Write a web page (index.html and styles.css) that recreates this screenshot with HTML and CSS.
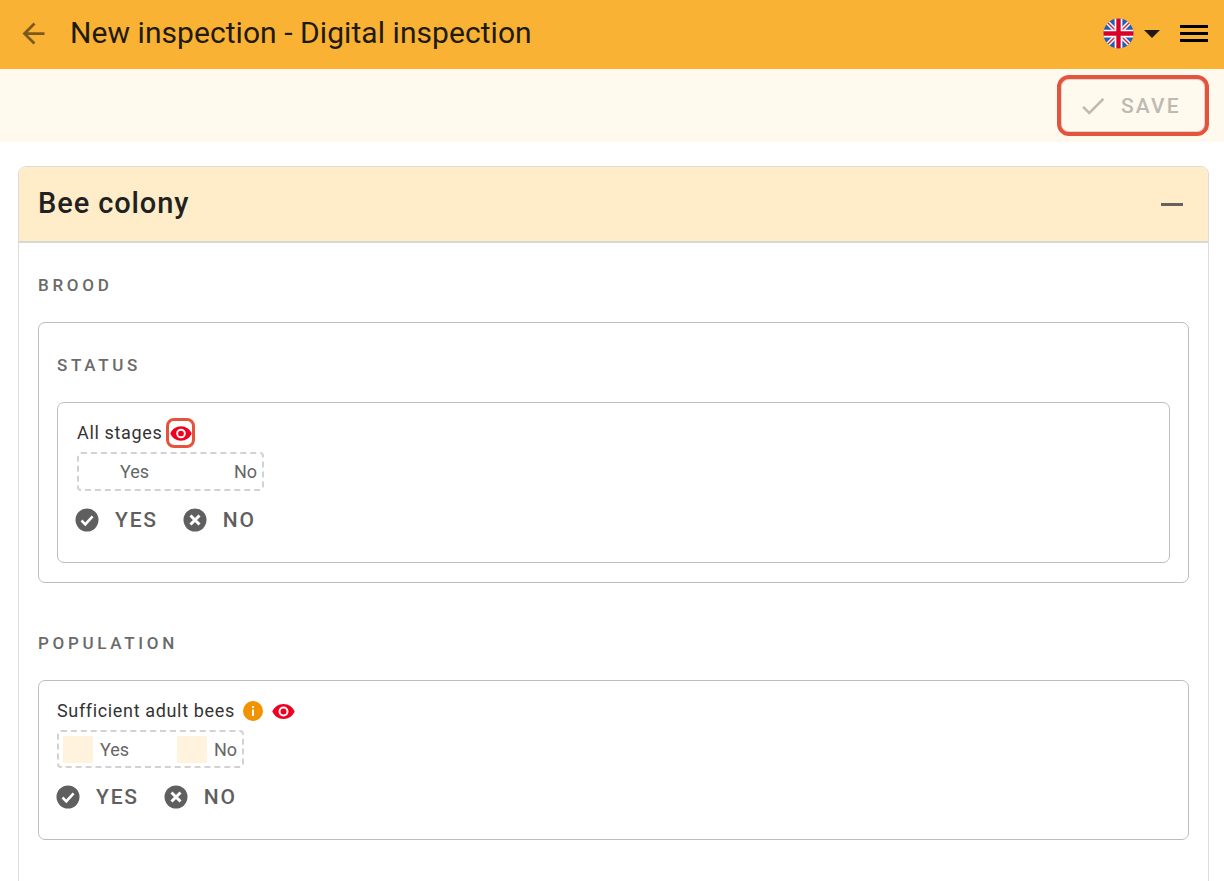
FILE: index.html
```html
<!DOCTYPE html>
<html lang="en">
<head>
<meta charset="utf-8">
<title>New inspection - Digital inspection</title>
<link rel="stylesheet" href="styles.css">
</head>
<body>
<div class="page">
  <header class="topbar">
    <svg class="back" width="33" height="33" viewBox="0 0 24 24"><path d="M20 11H7.83l5.59-5.59L12 4l-8 8 8 8 1.41-1.41L7.83 13H20z"/></svg>
    <h1 class="title">New inspection - Digital inspection</h1>
    <svg class="flag" width="31" height="31" viewBox="0 0 32 32">
      <defs><clipPath id="fc"><circle cx="16" cy="16" r="15.5"/></clipPath></defs>
      <g clip-path="url(#fc)">
        <rect width="32" height="32" fill="#1f5fb8"/>
        <path d="M0 0L32 32M32 0L0 32" stroke="#fff" stroke-width="4.5"/>
        <path d="M0 0L32 32M32 0L0 32" stroke="#e0203a" stroke-width="1.5"/>
        <path d="M16 0V32M0 16H32" stroke="#fff" stroke-width="8"/>
        <path d="M16 0V32M0 16H32" stroke="#d80027" stroke-width="4.5"/>
      </g>
    </svg>
    <span class="caret"></span>
    <svg class="menu" width="28" height="20" viewBox="0 0 28 20"><path d="M0 2h28v3H0zM0 9h28v3H0zM0 16h28v3H0z"/></svg>
  </header>
  <div class="actions">
    <button class="save" type="button">
      <svg width="30" height="30" viewBox="0 0 24 24"><path d="M9 16.17L4.83 12l-1.42 1.41L9 19 21 7l-1.41-1.41z"/></svg>
      <span>SAVE</span>
    </button>
  </div>
  <main class="content">
    <section class="card">
      <div class="card-head">
        <h2 class="card-title">Bee colony</h2>
        <span class="minus"></span>
      </div>
      <div class="card-body">
        <h3 class="overline">BROOD</h3>
        <div class="box box-outer">
          <h3 class="overline">STATUS</h3>
          <div class="box box-inner">
            <div class="label-row">
              <span class="label">All stages</span>
              <span class="eye-focus">
                <svg class="eye" width="23" height="15" viewBox="0 0 23 15"><path fill-rule="evenodd" d="M11.5 0C6.5 0 2.2 3 .3 7.5 2.2 12 6.500 15 11.500 15s9.300-3 11.200-7.500C20.800 3 16.500 0 11.500 0zm0 12.500a5 5 0 1 1 0-10 5 5 0 0 1 0 10zm0-8a3 3 0 1 0 0 6 3 3 0 0 0 0-6z"/></svg>
              </span>
            </div>
            <div class="options">
              <span class="swatch swatch-clear"></span><span class="opt">Yes</span>
              <span class="swatch swatch-clear"></span><span class="opt">No</span>
            </div>
            <div class="buttons">
              <span class="choice">
                <svg width="24" height="24" viewBox="0 0 24 24"><circle cx="12" cy="12" r="11.500"/><path class="mark" d="M6.500 12.500l3.800 3.800 7.300-8"/></svg>
                YES
              </span>
              <span class="choice">
                <svg width="24" height="24" viewBox="0 0 24 24"><circle cx="12" cy="12" r="11.500"/><path class="mark mark-x" d="M7.500 7.500l9 9M16.500 7.500l-9 9"/></svg>
                NO
              </span>
            </div>
          </div>
        </div>
        <h3 class="overline overline-next">POPULATION</h3>
        <div class="box box-pop">
          <div class="label-row">
            <span class="label">Sufficient adult bees</span>
            <svg class="info" width="20" height="20" viewBox="0 0 20 20"><circle cx="10" cy="10" r="10" fill="#f39200"/><path d="M9 8.500h2V15H9zM9 5h2v2H9z" fill="#fff"/></svg>
            <svg class="eye" width="23" height="15" viewBox="0 0 23 15"><path fill-rule="evenodd" d="M11.5 0C6.5 0 2.2 3 .3 7.5 2.2 12 6.500 15 11.500 15s9.300-3 11.200-7.500C20.800 3 16.500 0 11.500 0zm0 12.500a5 5 0 1 1 0-10 5 5 0 0 1 0 10zm0-8a3 3 0 1 0 0 6 3 3 0 0 0 0-6z"/></svg>
          </div>
          <div class="options">
            <span class="swatch"></span><span class="opt">Yes</span>
            <span class="swatch"></span><span class="opt">No</span>
          </div>
          <div class="buttons">
            <span class="choice">
              <svg width="24" height="24" viewBox="0 0 24 24"><circle cx="12" cy="12" r="11.500"/><path class="mark" d="M6.500 12.500l3.800 3.800 7.300-8"/></svg>
              YES
            </span>
            <span class="choice">
              <svg width="24" height="24" viewBox="0 0 24 24"><circle cx="12" cy="12" r="11.500"/><path class="mark mark-x" d="M7.500 7.500l9 9M16.500 7.500l-9 9"/></svg>
              NO
            </span>
          </div>
        </div>
      </div>
    </section>
  </main>
</div>
</body>
</html>
```
FILE: styles.css
```css
* { box-sizing: border-box; }
html, body { margin: 0; padding: 0; }
body { font-family: Roboto, "Liberation Sans", sans-serif; background: #fff; color: #212121; }
.page { height: 100vh; overflow: hidden; }
h1, h2, h3 { margin: 0; font-weight: 400; }

.topbar { height: 69px; background: #f9b233; display: flex; align-items: center; padding: 0 16px 3px 17px; }
.back { fill: #7a5a1c; flex: none; }
.title { font-size: 30px; line-height: 36px; letter-spacing: .06px; margin-left: 20px; flex: 1; color: #1f1a10; }
.flag { flex: none; }
.caret { width: 0; height: 0; border-left: 8px solid transparent; border-right: 8px solid transparent; border-top: 8px solid #1f1a10; margin-left: 10px; margin-top: 2px; }
.menu { margin-left: 20px; fill: #000; flex: none; }

.actions { height: 73px; background: #fff9ee; display: flex; justify-content: flex-end; align-items: center; padding-right: 15px; }
.save { width: 152px; height: 61px; border: 4px solid #e5533d; border-radius: 12px; background: transparent; box-shadow: inset 0 0 0 1px #d8d6d0; display: flex; align-items: center; padding: 0 0 0 17px; gap: 13px; font-family: inherit; font-size: 21px; font-weight: 500; letter-spacing: 2.1px; color: #bdbab2; }
.save svg { fill: #bdbab2; flex: none; }

.content { padding: 24px 15px 0 18px; }
.card { border: 1px solid #dcdcdc; border-radius: 8px; overflow: hidden; }
.card-head { height: 76px; background: #ffedc9; border-bottom: 2px solid #d9d7d2; display: flex; align-items: center; justify-content: space-between; padding: 0 25px 2px 19px; }
.card-title { font-size: 29px; font-weight: 500; letter-spacing: .9px; color: #212121; }
.minus { width: 22px; height: 3px; background: #66635e; margin-top: 2px; }
.card-body { padding: 30px 19px 80px; }

.overline { font-size: 17px; line-height: 24px; font-weight: 500; letter-spacing: 3.7px; color: #6a6a6a; }
.overline-next { margin-top: 48px; }
.box { border: 1px solid #bdbdbd; border-radius: 7px; }
.box-outer { margin-top: 25px; height: 261px; padding: 30px 18px 18px; }
.box-inner { margin-top: 25px; height: 161px; padding: 18px 19px; }
.box-pop { margin-top: 25px; height: 160px; padding: 18px 18px; }

.label-row { display: flex; align-items: center; height: 24px; }
.label { font-size: 18px; letter-spacing: .65px; color: #333; padding-bottom: 2px; }
.eye { fill: #f0001e; flex: none; }
.eye-focus { width: 29px; height: 30px; margin-left: 4px; border: 3px solid #e5533d; border-radius: 8px; display: flex; align-items: center; justify-content: center; flex: none; }
.eye-focus .eye { width: 22px; height: 15px; }
.info { margin-left: 8px; }
.box-pop .eye { margin-left: 9px; }

.options { margin-top: 7px; width: 187px; height: 39px; border: 2px dashed #d2d2d2; border-radius: 4px; display: flex; align-items: center; padding: 0 4px; }
.box-pop .options { height: 38px; }
.swatch { width: 30px; height: 27px; background: #fff3dd; flex: none; }
.swatch-clear { background: transparent; }
.opt { font-size: 18px; color: #666; margin-left: 7px; width: 48px; flex: none; }
.opt:last-child { width: auto; }
.opt + .swatch { margin-left: 29px; }

.buttons { display: flex; margin-top: 17px; margin-left: -2px; gap: 25px; }
.box-pop .buttons { margin-left: -1px; }
.choice { display: flex; align-items: center; gap: 16px; font-size: 21px; font-weight: 500; letter-spacing: 1.8px; color: #5f5f5f; height: 24px; }
.choice svg { fill: #5f5f5f; flex: none; }
.mark { fill: none; stroke: #fff; stroke-width: 2.600; }
.mark-x { stroke-width: 3; }
```
